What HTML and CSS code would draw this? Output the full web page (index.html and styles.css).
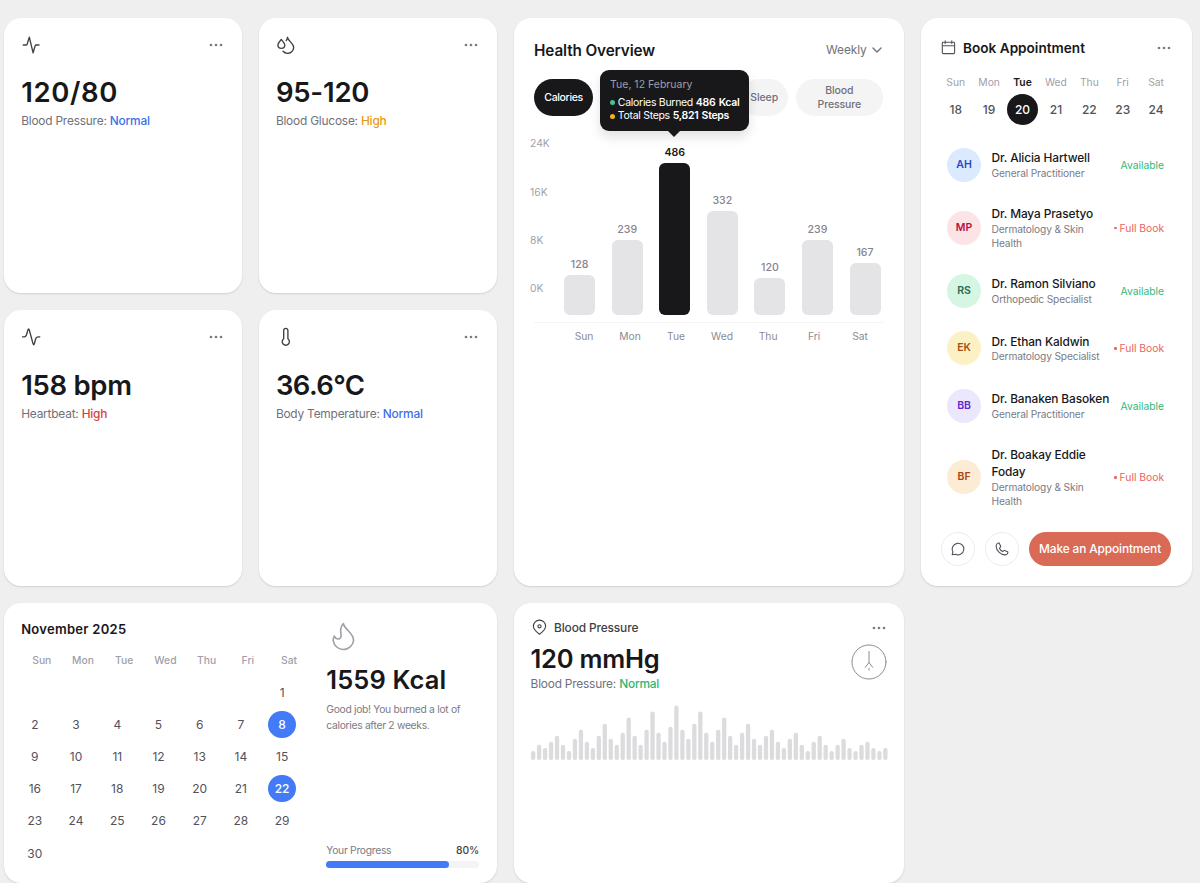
FILE: index.html
```html
<!DOCTYPE html>
<html lang="en">
<head>
    <meta charset="UTF-8">
    <meta name="viewport" content="width=device-width, initial-scale=1.0">
    <title>Health Dashboard</title>
    <link rel="stylesheet" href="styles.css">
</head>
<body>
    <main class="dashboard">
        <section class="card stat">
            <div class="card-head">
                <svg class="icon" viewBox="0 0 20 20"><path d="M2.3 10H5.4Q5.9 10 6.1 9.4L8.3 2.2 12.1 17.8 14.2 10.6Q14.4 10 15 10H18"/></svg>
                <svg class="dots" viewBox="0 0 14 4"><circle cx="2" cy="2" r="1.35"/><circle cx="7" cy="2" r="1.35"/><circle cx="12" cy="2" r="1.35"/></svg>
            </div>
            <h2 class="v-bp">120/80</h2>
            <p>Blood Pressure: <span class="blue">Normal</span></p>
        </section>

        <section class="card stat">
            <div class="card-head">
                <svg class="icon" viewBox="0 0 20 20"><path d="M5.3 4.4C4 6 1.9 8.1 1.9 10a3.4 3.4 0 0 0 6.9 0C8.8 8.1 6.6 6 5.3 4.4zM10.2 5.6Q11.2 4.2 11.5 2.3C12.2 6.2 17.7 8.2 17.7 12.6A6.2 6.2 0 0 1 11.5 18.4Q8.8 18.3 7 16.3"/></svg>
                <svg class="dots" viewBox="0 0 14 4"><circle cx="2" cy="2" r="1.35"/><circle cx="7" cy="2" r="1.35"/><circle cx="12" cy="2" r="1.35"/></svg>
            </div>
            <h2 class="v-glucose">95-120</h2>
            <p>Blood Glucose: <span class="orange">High</span></p>
        </section>

        <section class="card overview">
            <div class="overview-head">
                <h3>Health Overview</h3>
                <span class="select">Weekly <svg viewBox="0 0 10 10"><path d="M1 3 5 7 9 3"/></svg></span>
            </div>
            <div class="tabs">
                <button class="tab active">Calories</button>
                <button class="tab sleep">Sleep</button>
                <button class="tab wide">Blood Pressure</button>
                <div class="tooltip">
                    <p class="tip-date">Tue, 12 February</p>
                    <p class="tip-row"><i class="green-dot"></i>Calories Burned <b>486 Kcal</b></p>
                    <p class="tip-row"><i class="yellow-dot"></i>Total Steps <b>5,821 Steps</b></p>
                </div>
            </div>
            <div class="chart">
                <div class="y-axis"><span>24K</span><span>16K</span><span>8K</span><span>0K</span></div>
                <div class="bars" id="bars"></div>
            </div>
            <div class="x-axis"><span>Sun</span><span>Mon</span><span>Tue</span><span>Wed</span><span>Thu</span><span>Fri</span><span>Sat</span></div>
        </section>

        <section class="card booking">
            <div class="booking-head">
                <svg viewBox="0 0 15 15"><path d="M2.3 2.3H12.7Q13.6 2.3 13.6 3.2V12.6Q13.6 13.6 12.7 13.6H2.3Q1.3 13.6 1.3 12.6V3.2Q1.3 2.3 2.3 2.3zM1.3 5.8H13.6M4.2 .8V3.6M10.8 .8V3.6"/></svg>
                <h3>Book Appointment</h3>
                <svg class="dots" viewBox="0 0 14 4"><circle cx="2" cy="2" r="1.35"/><circle cx="7" cy="2" r="1.35"/><circle cx="12" cy="2" r="1.35"/></svg>
            </div>
            <div class="week">
                <div><span>Sun</span><b>18</b></div>
                <div><span>Mon</span><b>19</b></div>
                <div class="today"><span>Tue</span><b>20</b></div>
                <div><span>Wed</span><b>21</b></div>
                <div><span>Thu</span><b>22</b></div>
                <div><span>Fri</span><b>23</b></div>
                <div><span>Sat</span><b>24</b></div>
            </div>
            <ul class="doctors">
                <li><span class="avatar ah">AH</span><div><h4>Dr. Alicia Hartwell</h4><p>General Practitioner</p></div><em class="free">Available</em></li>
                <li><span class="avatar mp">MP</span><div><h4>Dr. Maya Prasetyo</h4><p>Dermatology &amp; Skin<br>Health</p></div><em class="full">Full Book</em></li>
                <li><span class="avatar rs">RS</span><div><h4>Dr. Ramon Silviano</h4><p>Orthopedic Specialist</p></div><em class="free">Available</em></li>
                <li><span class="avatar ek">EK</span><div><h4>Dr. Ethan Kaldwin</h4><p>Dermatology Specialist</p></div><em class="full">Full Book</em></li>
                <li><span class="avatar bb">BB</span><div><h4>Dr. Banaken Basoken</h4><p>General Practitioner</p></div><em class="free">Available</em></li>
                <li><span class="avatar bf">BF</span><div><h4>Dr. Boakay Eddie<br>Foday</h4><p>Dermatology &amp; Skin<br>Health</p></div><em class="full">Full Book</em></li>
            </ul>
            <div class="actions">
                <button class="round"><svg viewBox="0 0 14 14"><path d="M1.2 12.8 1.9 9.8A5.8 5.8 0 1 1 4.3 12.2z"/></svg></button>
                <button class="round"><svg viewBox="0 0 14 14"><path d="M4.3 1.2 5.6 4.3Q5.8 4.8 5.4 5.2L4.4 6.3Q5.4 8.6 7.7 9.6L8.8 8.6Q9.2 8.3 9.7 8.5L12.6 9.8Q13 10 12.9 10.5 12.5 12.8 10.1 12.9C5.4 12.7 1.3 8.6 1.1 3.9Q1.2 1.6 3.5 1 4.1.8 4.3 1.2z"/></svg></button>
                <button class="primary">Make an Appointment</button>
            </div>
        </section>

        <section class="card stat">
            <div class="card-head">
                <svg class="icon" viewBox="0 0 20 20"><path d="M1.5 9.8H3.2Q4.8 9.8 5.4 8L6.9 3Q7.6.6 8.3 3L12 16.6Q12.7 19 13.4 16.6L14.6 12Q15.2 9.8 17 9.8H18.8"/></svg>
                <svg class="dots" viewBox="0 0 14 4"><circle cx="2" cy="2" r="1.35"/><circle cx="7" cy="2" r="1.35"/><circle cx="12" cy="2" r="1.35"/></svg>
            </div>
            <h2 class="v-heart">158 bpm</h2>
            <p>Heartbeat: <span class="red">High</span></p>
        </section>

        <section class="card stat">
            <div class="card-head">
                <svg class="icon" viewBox="0 0 20 20"><path d="M7.7 11.7V3.4a2.1 2.1 0 0 1 4.2 0V11.7a3.6 3.6 0 1 1-4.2 0z"/></svg>
                <svg class="dots" viewBox="0 0 14 4"><circle cx="2" cy="2" r="1.35"/><circle cx="7" cy="2" r="1.35"/><circle cx="12" cy="2" r="1.35"/></svg>
            </div>
            <h2 class="v-temp">36.6°C</h2>
            <p>Body Temperature: <span class="blue">Normal</span></p>
        </section>

        <section class="card activity">
            <div class="calendar">
                <h3>November 2025</h3>
                <div class="cal-week"><span>Sun</span><span>Mon</span><span>Tue</span><span>Wed</span><span>Thu</span><span>Fri</span><span>Sat</span></div>
                <div class="cal-days" id="days"></div>
            </div>
            <div class="burned">
                <svg class="flame" viewBox="0 0 34 34"><path d="M17.4 3.5C18.5 10 27.6 12.6 27.6 20.5A10.3 10.3 0 0 1 7.2 20.7Q7 18.2 8.2 16.1 9.5 18.7 11.9 19 15.6 19 15 14.4 13.6 7.5 17.4 3.5z"/></svg>
                <h2>1559 Kcal</h2>
                <p class="note">Good job! You burned a lot of<br>calories after 2 weeks.</p>
                <div class="progress-label"><span>Your Progress</span><b>80%</b></div>
                <div class="progress"><div style="width: 80%"></div></div>
            </div>
        </section>

        <section class="card pressure">
            <div class="pressure-head">
                <svg viewBox="0 0 17 17"><path d="M8.5 15.2Q2.4 10.7 2.4 7.2A6.1 6.1 0 0 1 14.6 7.2Q14.6 10.7 8.5 15.2z"/><circle cx="8.5" cy="7.3" r="1.6"/></svg>
                <span>Blood Pressure</span>
                <svg class="dots" viewBox="0 0 14 4"><circle cx="2" cy="2" r="1.35"/><circle cx="7" cy="2" r="1.35"/><circle cx="12" cy="2" r="1.35"/></svg>
            </div>
            <div class="pressure-body">
                <div>
                    <h2>120 mmHg</h2>
                    <p>Blood Pressure: <span class="green">Normal</span></p>
                </div>
                <svg class="gauge" viewBox="0 0 36 36"><circle cx="18" cy="18" r="17"/><path d="M18 7.5V18.5L14.3 23.3M18 18.5 21.7 23.3M18 24.5V26"/></svg>
            </div>
            <svg class="wave" id="wave" viewBox="0 0 357 55"></svg>
        </section>
    </main>

    <script>
        // weekly bars: [label, height in px]
        const weekly = [[128, 40.5], [239, 75.5], [486, 152.5], [332, 104.5], [120, 37.5], [239, 75.5], [167, 52.5]];
        const bars = document.querySelector("#bars");
        weekly.forEach(function(item){
            const active = item[0] === 486 ? " active" : "";
            bars.innerHTML += `<div class="bar-col${active}"><span>${item[0]}</span><div class="bar" style="height: ${item[1]}px"></div></div>`;
        });

        // November 2025 starts on Saturday
        const days = document.querySelector("#days");
        for(let i = 1; i <= 30; i++){
            const cls = i === 8 || i === 22 ? ' class="marked"' : "";
            days.innerHTML += `<span${cls}>${i}</span>`;
        }

        // blood pressure wave
        const wave = document.querySelector("#wave");
        const values = [3, 5, 4, 6, 8, 5, 3, 7, 10, 6, 4, 8, 12, 7, 5, 9, 14, 8, 5, 10,
            16, 9, 6, 11, 18, 10, 7, 12, 16, 9, 6, 10, 14, 8, 5, 9, 12, 7, 5, 8,
            10, 6, 4, 7, 9, 5, 3, 6, 8, 5, 3, 5, 7, 4, 3, 5, 6, 4, 3, 4];
        let rects = "";
        values.forEach(function(v, i){
            const h = v * 3.03;
            rects += `<rect x="${i * 5.97}" y="${55 - h}" width="4.3" height="${h}" rx="2"/>`;
        });
        wave.innerHTML = rects;
    </script>
</body>
</html>
```
FILE: styles.css
```css
*{margin: 0; padding: 0; box-sizing: border-box;}
body {
    background-color: #efefef;
    font-family: Inter, "Liberation Sans", sans-serif;
    color: #18181b;
    height: 883px;
    overflow: hidden;
    white-space: nowrap;
}
button {
    border: none;
    font-family: inherit;
}
svg {
    fill: none;
    stroke: #3f3f46;
    stroke-width: 1.35;
    stroke-linecap: round;
    stroke-linejoin: round;
    flex: none;
}
h2, h3 {
    font-weight: 600;
}
.dashboard {
    display: grid;
    grid-template-columns: 237.7px 237.7px 390px 271px;
    grid-template-rows: 275.5px 275.5px 280.5px;
    gap: 17px;
    padding: 17.8px 0 0 4.2px;
}
.card {
    background-color: #fff;
    border-radius: 17px;
    padding: 17px;
    box-shadow: 0 1px 2px rgba(0, 0, 0, 0.13);
}
.overview, .booking {
    grid-row: span 2;
}
.activity {
    grid-column: span 2;
}

/* small stat cards */
.card-head {
    display: flex;
    justify-content: space-between;
    align-items: center;
    height: 20px;
}
.icon {
    width: 20px;
    height: 20px;
}
svg.dots {
    width: 14px;
    height: 4px;
    margin-right: 1.5px;
    fill: #7b7b84;
    stroke: none;
}
.stat h2 {
    font-size: 27.5px;
    line-height: 34px;
    margin-top: 20.3px;
}
.v-bp {letter-spacing: 0.65px;}
.v-glucose {letter-spacing: -0.2px;}
.v-heart {letter-spacing: -0.3px;}
.v-temp {letter-spacing: -0.6px;}
.stat p, .pressure p {
    font-size: 11.9px;
    line-height: 20px;
    letter-spacing: -0.21px;
    color: #71717a;
}
.stat p {
    margin-top: 2px;
}
.stat p span, .pressure p span {
    font-weight: 500;
}
.stat p .blue {color: #3b71e8;}
.stat p .orange {color: #e79a12;}
.stat p .red {color: #dc3d3d;}
.pressure p .green {color: #2fb574;}

/* health overview */
.overview {
    padding: 20px 20.5px;
}
.overview-head {
    display: flex;
    justify-content: space-between;
    align-items: center;
    height: 24px;
}
.overview-head h3 {
    font-size: 15.3px;
    letter-spacing: -0.12px;
    padding-top: 1px;
}
.select {
    display: flex;
    align-items: center;
    gap: 5px;
    font-size: 11.9px;
    letter-spacing: -0.1px;
    color: #71717a;
}
.select svg {
    width: 10px;
    height: 10px;
    margin-right: 1.5px;
    stroke: #71717a;
}
.tabs {
    position: relative;
    display: flex;
    gap: 7.5px;
    margin-top: 17px;
    height: 37.5px;
}
.tab {
    border-radius: 19px;
    padding: 0 10px;
    background-color: #f4f4f5;
    color: #71717a;
    font-size: 10.5px;
    line-height: 13.6px;
    letter-spacing: -0.1px;
    font-weight: 500;
}
.tab.active {
    width: 59px;
    background-color: #18181b;
    color: #fff;
    letter-spacing: -0.35px;
}
.tab.sleep {
    margin-left: auto;
}
.tab.wide {
    width: 87.5px;
    white-space: normal;
}
.tooltip {
    position: absolute;
    left: 66px;
    top: -9px;
    width: 149px;
    height: 61px;
    padding: 8.5px 10px;
    border-radius: 9px;
    background-color: #18181b;
    color: #fff;
    font-size: 10.5px;
    line-height: 13.6px;
    box-shadow: 0 6px 12px rgba(0, 0, 0, 0.12);
}
.tooltip::after {
    content: "";
    position: absolute;
    left: 67px;
    top: 60px;
    border: 7px solid transparent;
    border-top-color: #18181b;
    border-bottom: 0;
}
.tip-date {
    color: #9f9fa9;
    margin-bottom: 3.8px;
}
.tip-row {
    display: flex;
    align-items: center;
    gap: 2.8px;
    letter-spacing: -0.3px;
}
.tip-row i {
    flex: none;
    width: 5px;
    height: 5px;
    border-radius: 50%;
}
.tip-row b {
    font-weight: 600;
    word-spacing: 1px;
}
.green-dot {background-color: #4cc38a;}
.yellow-dot {background-color: #f5b120;}
.chart {
    display: flex;
    height: 186px;
    margin: 20px 0 0 -4px;
}
.y-axis {
    width: 34px;
    display: flex;
    flex-direction: column;
    gap: 34.4px;
    font-size: 10.3px;
    line-height: 14px;
    color: #9f9fa9;
}
.bars {
    flex: 1;
    display: flex;
    justify-content: space-between;
    align-items: flex-end;
    padding: 0 2.5px 7px 0;
}
.bar-col {
    width: 31px;
    text-align: center;
    font-size: 10.6px;
    line-height: 14px;
    font-weight: 500;
    color: #85858d;
}
.bar-col .bar {
    margin-top: 3px;
    border-radius: 6px;
    background-color: #e4e4e6;
}
.bar-col.active {
    color: #18181b;
    font-weight: 600;
}
.bar-col.active .bar {
    background-color: #18181b;
}
.x-axis {
    display: grid;
    grid-template-columns: repeat(7, 1fr);
    border-top: 1px solid #f4f4f5;
    padding: 6px 0 0 27px;
    text-align: center;
    font-size: 10.3px;
    line-height: 14px;
    color: #8b8b93;
}

/* book appointment */
.booking {
    padding: 20px 20.5px;
}
.booking-head {
    display: flex;
    align-items: center;
    height: 20px;
}
.booking-head svg {
    width: 15px;
    height: 15px;
    stroke: #52525b;
    stroke-width: 1.1;
}
.booking-head h3 {
    font-size: 13.6px;
    margin-left: 7px;
}
.booking-head svg.dots {
    width: 14px;
    height: 4px;
    stroke: none;
    margin: 0 0.5px 0 auto;
}
.week {
    display: grid;
    grid-template-columns: repeat(7, 33.4px);
    margin: 17px -2px 0;
    text-align: center;
    justify-items: center;
}
.week span {
    display: block;
    font-size: 10.3px;
    line-height: 14px;
    color: #9f9fa9;
}
.week b {
    display: block;
    width: 31px;
    margin-top: 5px;
    border-radius: 50%;
    font-size: 12px;
    font-weight: 500;
    line-height: 31px;
    color: #52525b;
}
.week .today span {
    color: #18181b;
    font-weight: 600;
}
.week .today b {
    background-color: #18181b;
    color: #fff;
}
.doctors {
    list-style: none;
    display: flex;
    flex-direction: column;
    gap: 23.5px;
    padding: 0 7px 0 6px;
    margin-top: 23.1px;
}
.doctors li {
    display: flex;
    align-items: center;
}
.doctors li div {
    margin-left: 10.5px;
}
.avatar {
    width: 34px;
    height: 34px;
    border-radius: 50%;
    text-align: center;
    font-size: 10.5px;
    font-weight: 600;
    line-height: 34px;
}
.ah {background-color: #dbeafe; color: #2546c0;}
.mp {background-color: #fce4e6; color: #b4133f;}
.rs {background-color: #d5f6e3; color: #2a6b50;}
.ek {background-color: #fcf1c5; color: #a8520f;}
.bb {background-color: #ebe7fc; color: #6427cf;}
.bf {background-color: #fcecd5; color: #b0430f;}
.doctors h4 {
    font-size: 11.9px;
    font-weight: 500;
    line-height: 17px;
    letter-spacing: -0.12px;
}
.doctors p {
    font-size: 10.2px;
    line-height: 13.6px;
    letter-spacing: -0.15px;
    margin-top: 0.7px;
    color: #7b7b84;
}
.doctors em {
    margin-left: auto;
    font-size: 10.3px;
    font-style: normal;
}
.free {
    color: #35b87a;
}
.full {
    color: #ea6464;
}
.full::before {
    content: "";
    display: inline-block;
    width: 2.4px;
    height: 2.4px;
    margin-right: 3px;
    border-radius: 50%;
    vertical-align: 2.5px;
    background-color: #ea6464;
}
.actions {
    display: flex;
    gap: 10px;
    margin-top: 23.5px;
}
.round {
    width: 34px;
    height: 34px;
    display: flex;
    justify-content: center;
    align-items: center;
    border: 1px solid #ececee;
    border-radius: 50%;
    background-color: #fff;
}
.round svg {
    width: 14px;
    height: 14px;
    stroke: #52525b;
    stroke-width: 1.1;
}
.primary {
    flex: 1;
    height: 34px;
    border-radius: 17px;
    background-color: #d96a55;
    color: #fff;
    font-size: 11.9px;
    font-weight: 500;
    letter-spacing: -0.13px;
}

/* calendar and calories */
.activity {
    display: flex;
}
.calendar {
    width: 288.5px;
}
.calendar h3 {
    font-size: 13px;
    line-height: 19px;
    letter-spacing: 0.28px;
}
.cal-week, .cal-days {
    display: grid;
    grid-template-columns: repeat(7, 1fr);
    text-align: center;
}
.cal-week {
    margin-top: 14.6px;
    font-size: 10.3px;
    line-height: 14px;
    font-weight: 500;
    color: #9f9fa9;
}
.cal-days {
    margin-top: 11.2px;
    row-gap: 4.9px;
}
.cal-days span {
    width: 27.3px;
    height: 27.3px;
    border-radius: 50%;
    font-size: 12px;
    line-height: 27.3px;
    color: #52525b;
}
.cal-days span:first-child {
    grid-column: 7;
}
.cal-days .marked {
    background-color: #437bf7;
    color: #fff;
    font-weight: 500;
}
.burned {
    width: 153px;
    margin-left: 16.6px;
    display: flex;
    flex-direction: column;
}
.flame {
    width: 34px;
    height: 34px;
    stroke: #9f9fa9;
    stroke-width: 1.6;
}
.burned h2, .pressure h2 {
    font-size: 25.5px;
    line-height: 34px;
}
.burned h2 {
    margin-top: 9px;
    letter-spacing: 0.12px;
}
.pressure h2 {
    letter-spacing: -0.25px;
}
.note {
    margin-top: 4px;
    font-size: 10.3px;
    line-height: 16.6px;
    letter-spacing: -0.3px;
    color: #7b7b84;
}
.progress-label {
    display: flex;
    justify-content: space-between;
    margin-top: auto;
    font-size: 10.3px;
    line-height: 14px;
    letter-spacing: -0.28px;
    color: #7b7b84;
}
.progress-label b {
    font-weight: 500;
    letter-spacing: 0;
    color: #3f3f46;
}
.progress {
    height: 7px;
    margin: 3.8px 0 -1.3px;
    border-radius: 4px;
    background-color: #f4f4f5;
}
.progress div {
    height: 7px;
    border-radius: 4px;
    background-color: #437bf7;
}

/* blood pressure */
.pressure-head {
    display: flex;
    align-items: center;
    height: 16px;
    font-size: 11.9px;
    font-weight: 500;
    letter-spacing: -0.13px;
    color: #3f3f46;
}
.pressure-head svg {
    width: 17px;
    height: 17px;
    margin-right: 6.5px;
    stroke-width: 1.1;
}
.pressure-head svg.dots {
    width: 14px;
    height: 4px;
    margin: 0 0.5px 0 auto;
}
.pressure-body {
    display: flex;
    justify-content: space-between;
    align-items: flex-start;
    margin-top: 6px;
}
.pressure h2 + p {
    margin-top: -2px;
}
.gauge {
    width: 36px;
    height: 36px;
    margin-top: 2.3px;
    stroke: #8b8b93;
    stroke-width: 1;
}
.wave {
    display: block;
    width: 357px;
    height: 55px;
    margin-top: 11.6px;
    fill: #dcdcdf;
    stroke: none;
}
```
